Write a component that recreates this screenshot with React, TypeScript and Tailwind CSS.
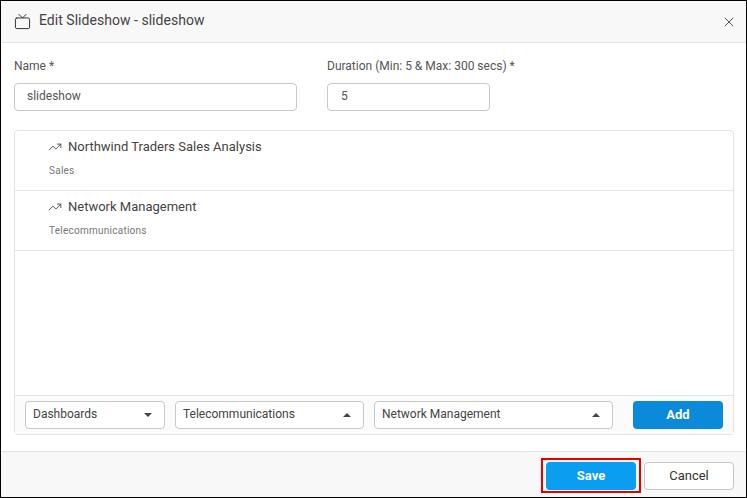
import React from "react";
import { TrendingUp, Tv, X } from "lucide-react";

const items = [
  { title: "Northwind Traders Sales Analysis", category: "Sales" },
  { title: "Network Management", category: "Telecommunications" },
];

const Caret = ({ up }: { up?: boolean }) => (
  <svg width="8" height="4" viewBox="0 0 8 4" className="shrink-0">
    <path d={up ? "M0 4 L4 0 L8 4 Z" : "M0 0 L4 4 L8 0 Z"} fill="#444444" />
  </svg>
);

const Select = ({ label, up, className }: { label: string; up?: boolean; className: string }) => (
  <div className={`h-[28px] shrink-0 flex items-center justify-between bg-white border border-[#c8c8c8] rounded-[4px] pl-[7px] pr-[12px] ${className}`}>
    <span className="text-[12px] pb-[2px] text-[#444444]">{label}</span>
    <Caret up={up} />
  </div>
);

export default function App() {
  return (
    <div
      className="w-[747px] h-[498px] flex flex-col bg-white border border-black overflow-hidden"
      style={{ fontFamily: "Roboto, sans-serif" }}
    >
      {/* Header */}
      <div className="h-[42px] shrink-0 flex items-center justify-between bg-[#f8f8f8] border-b border-[#e3e3e3] pl-[13px] pr-[9px]">
        <div className="flex items-center">
          <Tv size={17} strokeWidth={1.4} className="text-[#333333]" />
          <span className="ml-[8px] pb-[2px] text-[14px] tracking-[0.03px] text-[#444444]">Edit Slideshow - slideshow</span>
        </div>
        <X size={16} strokeWidth={1.5} className="text-[#555555]" />
      </div>

      {/* Form */}
      <div className="flex-1 flex flex-col pl-[13px] pr-[12px] pt-[15px] pb-[16px]">
        <div className="flex gap-[30px]">
          <div>
            <div className="text-[12px] leading-[16px] text-[#555555]">Name *</div>
            <div className="mt-[9px] w-[283px] h-[28px] flex items-center border border-[#c8c8c8] rounded-[4px] pl-[12px] pb-[2px] text-[12px] text-[#555555]">
              slideshow
            </div>
          </div>
          <div>
            <div className="text-[12px] leading-[16px] text-[#555555]">Duration (Min: 5 &amp; Max: 300 secs) *</div>
            <div className="mt-[9px] w-[163px] h-[28px] flex items-center border border-[#c8c8c8] rounded-[4px] pl-[13px] pb-[2px] text-[12px] text-[#555555]">
              5
            </div>
          </div>
        </div>

        <div className="mt-[19px] flex-1 flex flex-col border border-[#e3e3e3] rounded-[4px]">
          <div className="flex-1">
            {items.map((item) => (
              <div key={item.title} className="h-[60px] border-b border-[#e3e3e3] pl-[33px] pt-[7px]">
                <div className="flex items-center h-[18px]">
                  <TrendingUp size={14} strokeWidth={1.4} className="text-[#333333] -mt-[1px]" />
                  <span className="ml-[6px] text-[13px] text-[#444444]">{item.title}</span>
                </div>
                <div className="mt-[8px] ml-[1px] text-[10px] leading-[14px] tracking-[0.25px] text-[#777777]">{item.category}</div>
              </div>
            ))}
          </div>

          {/* Picker row */}
          <div className="h-[39px] shrink-0 flex items-center bg-[#fbfbfb] border-t border-[#e3e3e3] pl-[10px] pr-[10px]">
            <Select label="Dashboards" className="w-[140px]" />
            <Select label="Telecommunications" up className="w-[189px] ml-[10px]" />
            <Select label="Network Management" up className="w-[239px] ml-[10px]" />
            <div className="ml-[20px] w-[90px] h-[28px] flex items-center justify-center rounded-[4px] bg-[#0a8ad8] text-white text-[13px] font-bold">
              Add
            </div>
          </div>
        </div>
      </div>

      {/* Footer */}
      <div className="h-[46px] shrink-0 flex items-center justify-end bg-[#f8f8f8] border-t border-[#e3e3e3] pr-[12px] pt-[2px]">
        <div className="border-2 border-[#e60000] pt-[2px] pb-[1px] px-[3px] mr-[3px]">
          <div className="w-[90px] h-[28px] flex items-center justify-center rounded-[4px] bg-[#0a9ef0] text-white text-[13px] font-bold">
            Save
          </div>
        </div>
        <div className="w-[90px] h-[28px] flex items-center justify-center rounded-[4px] bg-white border border-[#c8c8c8] text-[13px] text-[#333333]">
          Cancel
        </div>
      </div>
    </div>
  );
}
